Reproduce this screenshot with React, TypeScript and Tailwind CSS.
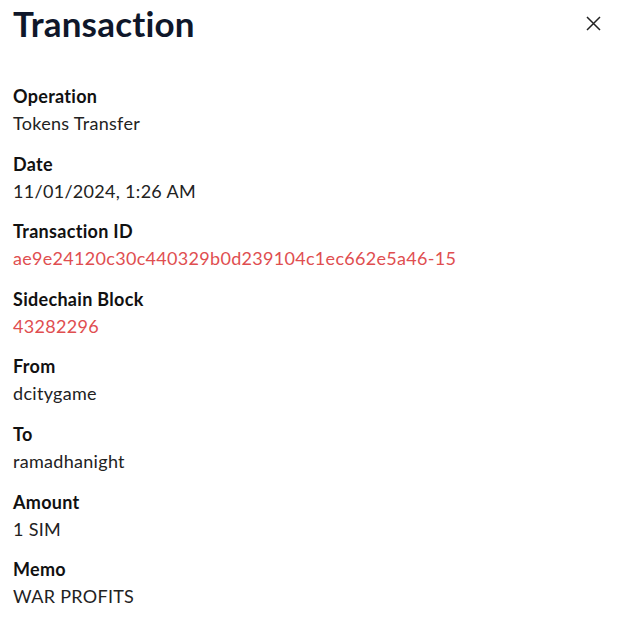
import React from "react";

const rows: { label: string; value: string; link?: boolean }[] = [
  { label: "Operation", value: "Tokens Transfer" },
  { label: "Date", value: "11/01/2024, 1:26 AM" },
  { label: "Transaction ID", value: "ae9e24120c30c440329b0d239104c1ec662e5a46-15", link: true },
  { label: "Sidechain Block", value: "43282296", link: true },
  { label: "From", value: "dcitygame" },
  { label: "To", value: "ramadhanight" },
  { label: "Amount", value: "1 SIM" },
  { label: "Memo", value: "WAR PROFITS" },
];

export default function App() {
  return (
    <div className="w-[621px] h-[635px] bg-white font-['Lato',sans-serif] text-[#1a1a1a]">
      <div className="flex items-center justify-between pl-[13px] pr-[20px] h-[47px]">
        <h1 className="text-[35px] font-bold leading-none tracking-[0.2px] text-[#0f172a]">Transaction</h1>
        <button className="w-[15px] h-[15px] flex items-center justify-center text-[#222]">
          <svg width="15" height="15" viewBox="0 0 15 15" fill="none" stroke="currentColor" strokeWidth="1.5">
            <path d="M1 1L14 14M14 1L1 14" />
          </svg>
        </button>
      </div>
      <div className="pl-[13px] pt-[36px]">
        {rows.map((r) => (
          <div key={r.label} className="mb-[13.6px]">
            <div className="text-[18px] font-bold leading-[27px] tracking-[0.3px] text-[#111]">{r.label}</div>
            <div className={`text-[18px] leading-[27px] tracking-[0.3px] ${r.link ? "text-[#e04e50]" : "text-[#222]"}`}>{r.value}</div>
          </div>
        ))}
      </div>
    </div>
  );
}
